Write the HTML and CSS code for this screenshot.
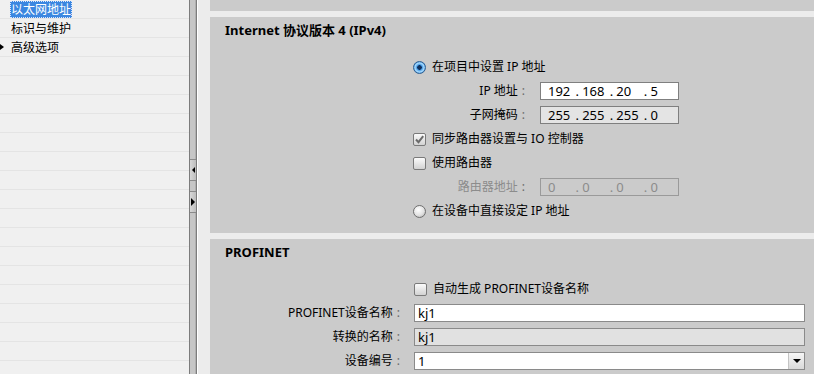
FILE: index.html
```html
<!DOCTYPE html>
<html lang="zh-CN">
<head>
    <meta charset="UTF-8">
    <title>以太网地址</title>
    <link rel="stylesheet" href="styles.css">
</head>
<body>
    <div class="tree">
        <div class="tree-row"><span class="tree-item selected">以太网地址</span></div>
        <div class="tree-row"><span class="tree-item">标识与维护</span></div>
        <div class="tree-row"><span class="bullet"></span><span class="tree-item">高级选项</span></div>
        <div class="tree-row"></div>
        <div class="tree-row"></div>
        <div class="tree-row"></div>
        <div class="tree-row"></div>
        <div class="tree-row"></div>
        <div class="tree-row"></div>
        <div class="tree-row"></div>
        <div class="tree-row"></div>
        <div class="tree-row"></div>
        <div class="tree-row"></div>
        <div class="tree-row"></div>
        <div class="tree-row"></div>
        <div class="tree-row"></div>
        <div class="tree-row"></div>
        <div class="tree-row"></div>
        <div class="tree-row"></div>
        <div class="tree-row"></div>
    </div>

    <div class="splitter">
        <div class="split-btn first"><span class="arrow-left"></span></div>
        <div class="split-btn"><span class="arrow-right"></span></div>
    </div>

    <div class="content">
        <div class="panel stub"></div>

        <div class="panel ipv4">
            <div class="panel-title">Internet 协议版本 4 (IPv4)</div>
            <div class="grid ip-grid">
                <div class="row span">
                    <span class="radio checked"></span>在项目中设置 IP 地址
                </div>
                <div class="row">
                    <span class="label">IP 地址<span class="colon">:</span></span>
                    <div class="ip-box">
                        <span class="oct">192</span><span class="dot">.</span>
                        <span class="oct">168</span><span class="dot">.</span>
                        <span class="oct">20</span><span class="dot">.</span>
                        <span class="oct">5</span>
                    </div>
                </div>
                <div class="row">
                    <span class="label">子网掩码<span class="colon">:</span></span>
                    <div class="ip-box readonly">
                        <span class="oct">255</span><span class="dot">.</span>
                        <span class="oct">255</span><span class="dot">.</span>
                        <span class="oct">255</span><span class="dot">.</span>
                        <span class="oct">0</span>
                    </div>
                </div>
                <div class="row span">
                    <span class="check checked">
                        <svg width="11" height="11" viewBox="0 0 11 11"><path d="M2 5.5 L4.5 8.2 L9.2 2.2" fill="none" stroke="#6b6b6b" stroke-width="2"/></svg>
                    </span>同步路由器设置与 IO 控制器
                </div>
                <div class="row span">
                    <span class="check"></span>使用路由器
                </div>
                <div class="row">
                    <span class="label disabled">路由器地址<span class="colon">:</span></span>
                    <div class="ip-box disabled">
                        <span class="oct">0</span><span class="dot">.</span>
                        <span class="oct">0</span><span class="dot">.</span>
                        <span class="oct">0</span><span class="dot">.</span>
                        <span class="oct">0</span>
                    </div>
                </div>
                <div class="row span">
                    <span class="radio"></span>在设备中直接设定 IP 地址
                </div>
            </div>
        </div>

        <div class="panel profinet">
            <div class="panel-title">PROFINET</div>
            <div class="grid pn-grid">
                <div class="row">
                    <span class="label"></span>
                    <div class="opt"><span class="check"></span>自动生成 PROFINET设备名称</div>
                </div>
                <div class="row">
                    <span class="label">PROFINET设备名称<span class="colon">:</span></span>
                    <div class="field">kj1</div>
                </div>
                <div class="row">
                    <span class="label">转换的名称<span class="colon">:</span></span>
                    <div class="field readonly">kj1</div>
                </div>
                <div class="row">
                    <span class="label">设备编号<span class="colon">:</span></span>
                    <div class="field select">1<span class="drop"><span class="arrow-down"></span></span></div>
                </div>
            </div>
        </div>
    </div>
</body>
</html>
```

FILE: styles.css
```css
* { box-sizing: border-box; }
html, body { margin: 0; height: 100%; }
body { display: flex; overflow: hidden; font-family: "Noto Sans", "Noto Sans CJK SC", sans-serif; font-size: 12px; line-height: 16px; color: #000; background-color: #ececec; }

/* left tree */
.tree { width: 190px; flex: none; background-color: #f0f0f0; border-right: 1px solid #7c7c7c; overflow: hidden; }
.tree-row { height: 19px; border-bottom: 1px solid #e4e4e4; display: flex; align-items: center; position: relative; }
.tree-item { margin-left: 10px; padding: 0 1px; height: 17px; line-height: 17px; }
.tree-item.selected { background-color: #3b87e0; color: #fff; outline: 1px dotted #d9e6ff; outline-offset: -1px; }
.bullet { position: absolute; left: 0; top: 6px; width: 0; height: 0; border-top: 3px solid transparent; border-bottom: 3px solid transparent; border-left: 4px solid #000; }

/* splitter */
.splitter { width: 7px; flex: none; background-color: #c6c6c6; border-right: 1px solid #7c7c7c; box-shadow: inset -1px 0 0 #b0b0b0; position: relative; margin-right: 0; }
.splitter::after { content: ""; position: absolute; right: -2px; top: 0; bottom: 0; width: 1px; background-color: #fff; }
.split-btn { height: 22px; margin-top: 10px; border-top: 1px solid #8a8a8a; border-bottom: 1px solid #8a8a8a; background: linear-gradient(to right, #d8d8d8, #bdbdbd); display: flex; align-items: center; justify-content: center; }
.split-btn.first { margin-top: 159px; }
.arrow-left { width: 0; height: 0; border-top: 3px solid transparent; border-bottom: 3px solid transparent; border-right: 3px solid #000; }
.arrow-right { width: 0; height: 0; border-top: 4px solid transparent; border-bottom: 4px solid transparent; border-left: 4px solid #000; }

/* content */
.content { flex: 1; display: flex; flex-direction: column; gap: 6px; padding-left: 12px; margin-left: 1px; overflow: hidden; }
.panel { background-color: #cbcbcb; flex: none; }
.panel.stub { height: 11px; }
.panel.ipv4 { height: 216px; }
.panel.profinet { flex: 1; padding-right: 9px; }
.panel-title { margin: 4px 0 16px 15px; height: 18px; line-height: 18px; font-size: 13px; font-weight: bold; }

.grid { display: grid; column-gap: 10px; grid-auto-rows: 24px; }
.ip-grid { padding-left: 203px; grid-template-columns: 117px 139px; }
.pn-grid { padding-left: 15px; grid-template-columns: 179px 1fr; }
.row { display: contents; }
.row > * { align-self: center; }
.row.span { display: flex; align-items: center; grid-column: 1 / -1; }

.label { text-align: right; padding-right: 5px; white-space: nowrap; }
.pn-grid .label { padding-right: 4px; }
.label.disabled { color: #8c8c8c; }
.colon { margin-left: 4px; color: #6a6a6a; }

.radio { width: 13px; height: 13px; margin-right: 6px; border-radius: 50%; border: 1px solid #6f6f6f; background: radial-gradient(circle at 40% 35%, #ffffff, #e2e2e2 55%, #a9a9a9); flex: none; }
.radio.checked { border-color: #2c5f93; background: radial-gradient(circle, #10305c 0 2px, #3e93e0 2.5px, #a8dcff 4.5px, #2e7ac8 6.5px); }

.check { width: 13px; height: 13px; margin-right: 6px; border: 1px solid #7a7a7a; border-radius: 2px; background: linear-gradient(#fbfbfb, #d2d2d2); display: inline-flex; align-items: center; justify-content: center; flex: none; }
.opt { display: flex; align-items: center; }

.ip-box { height: 18px; border: 1px solid #7f7f7f; background-color: #fff; display: flex; align-items: center; padding-left: 7px; font-size: 13px; }
.ip-box.readonly { background-color: #e4e4e4; }
.ip-box.disabled { border-color: #9a9a9a; background-color: transparent; color: #8c8c8c; }
.oct { width: 29px; }
.dot { width: 7px; }

.field { height: 18px; border: 1px solid #8a8a8a; background-color: #fff; padding-left: 3px; font-size: 13px; line-height: 16px; position: relative; }
.field.readonly { background-color: #e1e1e1; }
.drop { position: absolute; right: 0; top: 0; bottom: 0; width: 16px; background: linear-gradient(#f6f6f6, #d9d9d9); border-left: 1px solid #c4c4c4; display: flex; align-items: center; justify-content: center; }
.arrow-down { width: 0; height: 0; border-left: 4px solid transparent; border-right: 4px solid transparent; border-top: 4px solid #000; }
```
